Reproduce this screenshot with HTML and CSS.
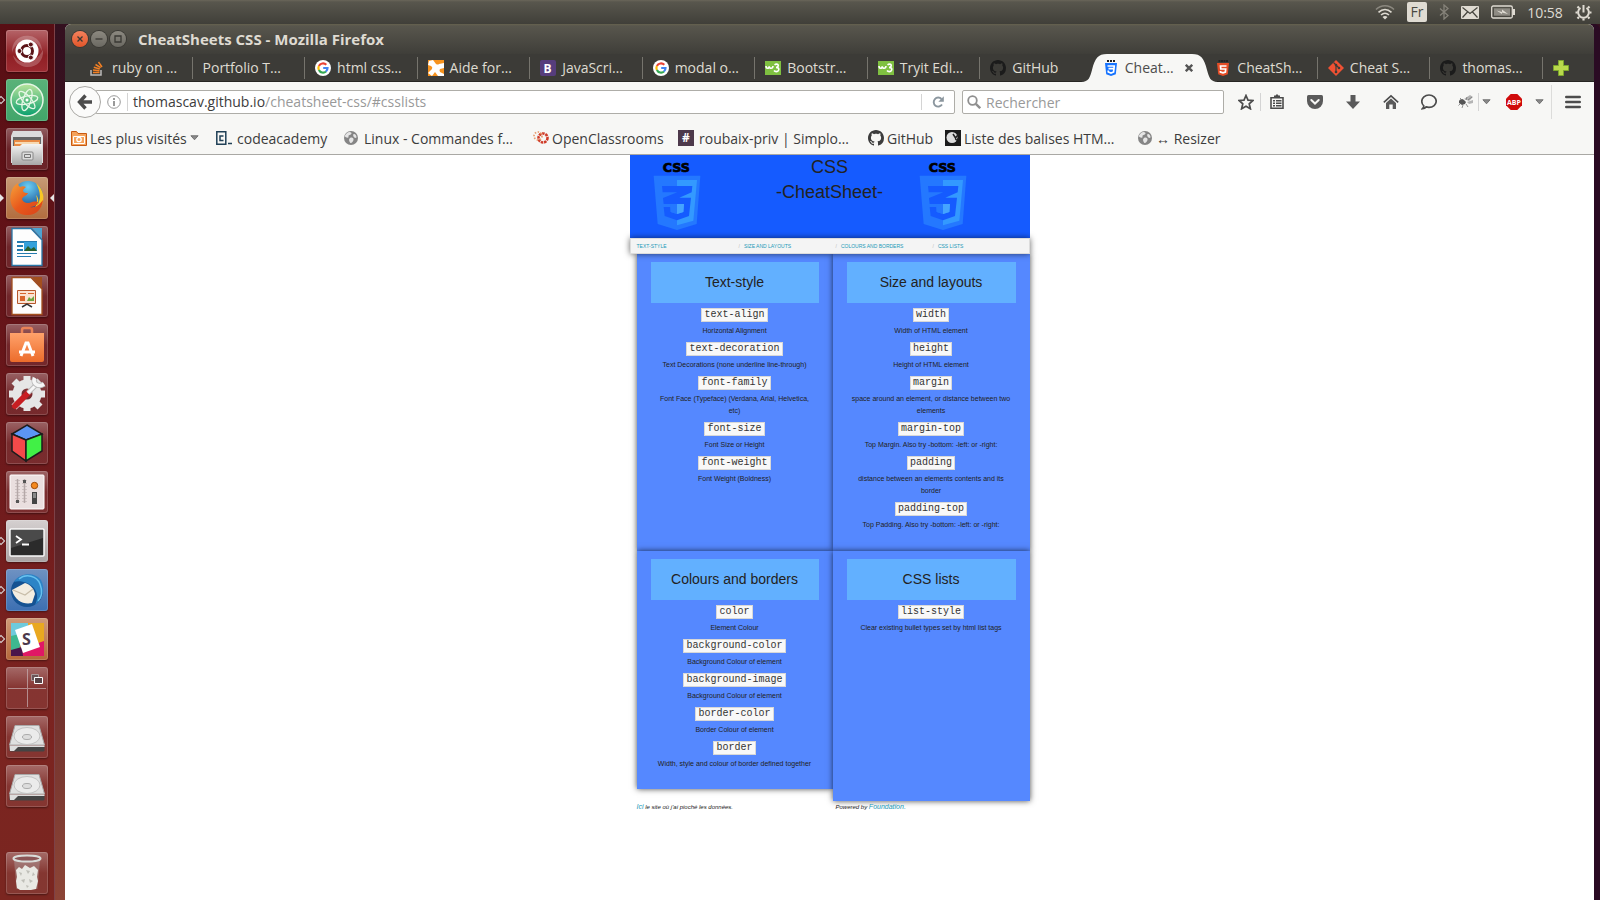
FILE: index.html
```html
<!DOCTYPE html>
<html lang="fr">
<head>
<meta charset="utf-8">
<title>CheatSheets CSS - Mozilla Firefox</title>
<link rel="stylesheet" href="styles.css">
</head>
<body>
<svg class="sprite" aria-hidden="true">
  <defs>
    <linearGradient id="metal" x1="0" y1="0" x2="0" y2="1"><stop offset="0" stop-color="#f4f4f4"/><stop offset="1" stop-color="#a8a8a8"/></linearGradient>
    <linearGradient id="bag" x1="0" y1="0" x2="0" y2="1"><stop offset="0" stop-color="#ffa26b"/><stop offset="1" stop-color="#ec6c2b"/></linearGradient>
    <linearGradient id="fox" x1="0" y1="0" x2="1" y2="1"><stop offset="0" stop-color="#f6a13a"/><stop offset=".5" stop-color="#e8591c"/><stop offset="1" stop-color="#d8421a"/></linearGradient>
    <radialGradient id="sea" cx=".5" cy=".2" r=".8"><stop offset="0" stop-color="#6cd0f5"/><stop offset="1" stop-color="#0d3f86"/></radialGradient>
    <linearGradient id="leaf" x1="0" y1="0" x2="0" y2="1"><stop offset="0" stop-color="#b8e39b"/><stop offset="1" stop-color="#0aa06e"/></linearGradient>
  </defs>
  <symbol id="github" viewBox="0 0 16 16"><path fill="currentColor" d="M8 0C3.58 0 0 3.58 0 8c0 3.54 2.29 6.53 5.47 7.59.4.07.55-.17.55-.38 0-.19-.01-.82-.01-1.49-2.01.37-2.53-.49-2.69-.94-.09-.23-.48-.94-.82-1.13-.28-.15-.68-.52-.01-.53.63-.01 1.08.58 1.23.82.72 1.21 1.87.87 2.33.66.07-.52.28-.87.51-1.07-1.78-.2-3.64-.89-3.64-3.95 0-.87.31-1.59.82-2.15-.08-.2-.36-1.02.08-2.12 0 0 .67-.21 2.2.82.64-.18 1.32-.27 2-.27s1.36.09 2 .27c1.53-1.04 2.2-.82 2.2-.82.44 1.1.16 1.92.08 2.12.51.56.82 1.27.82 2.15 0 3.07-1.87 3.75-3.65 3.95.29.25.54.73.54 1.48 0 1.07-.01 1.93-.01 2.2 0 .21.15.46.55.38A8.01 8.01 0 0 0 16 8c0-4.42-3.58-8-8-8z"/></symbol>
  <symbol id="google" viewBox="0 0 16 16"><circle cx="8" cy="8" r="8" fill="#fff"/><g fill="none" stroke-width="2.2"><path stroke="#ea4335" d="M3.9 6A4.6 4.6 0 0 1 11.3 4.8"/><path stroke="#fbbc05" d="M3.9 10.1A4.6 4.6 0 0 1 3.9 5.9"/><path stroke="#34a853" d="M11 11.5A4.6 4.6 0 0 1 3.9 10"/><path stroke="#4285f4" d="M8.2 8h4.3a4.6 4.6 0 0 1-1.6 3.5"/></g></symbol>
  <symbol id="w3" viewBox="0 0 16 16"><path fill="#7fc041" d="M0 1h16v14H0z"/><path fill="none" stroke="#fff" stroke-width="1.6" d="M1 6c0 3 3 3 3.2.2C4.400 9 7.800 9 8 6M9.500 4.800c2-1.500 4.500-.4 3.500 1.600-.5 1-1.500 1-2 1 2 0 3.500 1 2.500 3-.9 1.700-3.500 1.500-4.500.1"/></symbol>
  <symbol id="css-mini" viewBox="0 0 16 16"><path fill="#222" d="M4 0h2v2H4zM7 0h2v2H7zM10 0h2v2h-2z"/><path fill="#1673ff" d="M2 3h12l-1.200 11.300L8 16l-4.800-1.700z"/><path fill="none" stroke="#fff" stroke-width="1.700" d="M4.500 6h6.700l-.2 2.600H5.500M11 8l-.4 4L8 13l-2.700-1-.1-1.500"/></symbol>
  <symbol id="html-mini" viewBox="0 0 16 16"><path fill="#222" d="M3.500 0h2v2h-2zM6 0h2v2H6zM8.500 0h2v2h-2zM11 0h2v2h-2z"/><path fill="#e44d26" d="M2 3h12l-1.200 11.300L8 16l-4.800-1.700z"/><path fill="none" stroke="#fff" stroke-width="1.700" d="M11.500 6h-6l.3 3h4.900l-.3 3L8 12.800 5.500 12l-.1-1"/></symbol>
  <symbol id="globe" viewBox="0 0 16 16"><circle cx="8" cy="8" r="7" fill="#858585"/><path fill="#e5e5e5" d="M4 3c2-2 5-1 4.500.5S5 5 5.500 6.500 4 8 2.500 7 3 4 4 3zM7 8c2-1 4 0 3.500 2S8 14 7 12.500 5.500 9 7 8zM11 4c1.500 0 2.500 1.500 2.500 3S11 8 10.500 6.500 10 4 11 4z"/></symbol>
  <symbol id="down" viewBox="0 0 10 6"><path fill="#8a8a8a" stroke="#6b6b6b" d="M1 .5h8L5 5z"/></symbol>
  <symbol id="drive" viewBox="0 0 42 42"><path fill="#e0e0e0" stroke="#aaa" d="M9 9.500h24L38.500 29h-35z"/><path fill="#444" d="M3.500 30h35v4.500l-1 1h-33l-1-1z"/><path fill="#ddd" d="M3.500 29.500h35V31H12l-4 4H4z"/><ellipse cx="21" cy="20" rx="13" ry="8.500" fill="#ebebeb" stroke="#c2c2c2"/><ellipse cx="21" cy="21" rx="4.500" ry="2.500" fill="#ddd" stroke="#aaa"/></symbol>
  <symbol id="css-logo" viewBox="756 480 150 216">
    <text class="logo-word" x="788" y="516">CSS</text>
    <path fill="#2478ff" d="M761 527h140l-11 145-59 18-58-18z"/>
    <path fill="#3399ff" d="M831 540h60l-11 122-49 14z"/>
    <path fill="#155bff" d="M786 558h91l-2 19-37 16h35l-6 55-36 13-37-13-3-27h20l1 15 19 6 19-6 2-24h-61l-2-18 43-17h-44z"/>
    <path fill="#2478ff" d="M811 612h20v30l-19-6z"/>
    <path fill="#45a4ff" d="M831 612h21l-2 24-19 6z"/>
  </symbol>
</svg>

<header class="panel">
  <svg width="20" height="16" viewBox="0 0 20 16" fill="none" stroke="#dfdbd2" stroke-width="1.600"><path stroke="#8b887f" d="M1 5.500C6 .5 14 .5 19 5.500"/><path d="M3.500 8.300c4-3.700 9-3.700 13 0M6 11c2.500-2.200 5.500-2.200 8 0"/><path fill="#dfdbd2" stroke="none" d="M10 15.500 7.500 13c1.500-1.200 3.500-1.200 5 0z"/></svg>
  <span class="keyboard">Fr</span>
  <svg width="10" height="16" viewBox="0 0 10 16" fill="none" stroke="#86837a" stroke-width="1.300"><path d="m1 4.500 8 7L5 15V1l4 3.500-8 7"/></svg>
  <svg width="18" height="13" viewBox="0 0 18 13"><rect width="18" height="13" rx="1" fill="#dfdbd2"/><path fill="none" stroke="#45443d" stroke-width="1.200" d="m1.500 1.500 7.500 6 7.500-6M1.500 11.500 6.500 6M16.500 11.500l-5-5.500"/></svg>
  <svg width="24" height="14" viewBox="0 0 24 14"><rect x=".7" y="1" width="20.600" height="12" rx="1.500" fill="none" stroke="#dfdbd2" stroke-width="1.300"/><path fill="#8e8b83" d="M3 3.300h16v7.400H3z"/><path fill="#dfdbd2" d="M22 4h2v6h-2zM5.500 5.500 11 7V4.500l6 4.500-6-1.500V9z"/></svg>
  <time class="clock">10:58</time>
  <svg width="17" height="17" viewBox="0 0 17 17" fill="none" stroke="#dfdbd2"><path stroke-width="2" d="M5.500 3.800a5.400 5.400 0 1 0 6 0"/><path stroke-width="2" d="M8.500 1v7.500"/><path stroke-width="2.200" d="M.5 8.500h2M14.500 8.500h2M8.500 14.500v2M2.500 2.500 4 4M14.500 2.500 13 4M2.500 14.500 4 13M14.500 14.500 13 13"/></svg>
</header>

<div class="desktop">
  <nav class="launcher" aria-label="Lanceur">
    <button class="tile tile-dash" aria-label="Ubuntu"><svg viewBox="0 0 42 42"><path fill="#fff" opacity=".22" d="M6 23C5 11 14 4 24 6c7 1 12 7 12 15-4-10-14-14-22-9C9 15 7 19 6 23zM37 20c1 11-7 18-17 17C13 36 8 31 7 25c5 8 14 10 21 5 4-3 7-6 9-10z"/><circle cx="21" cy="21" r="11.500" fill="#fff"/><circle cx="21" cy="21" r="5.500" fill="none" stroke="#5b1418" stroke-width="3"/><g fill="#5b1418" stroke="#fff"><circle cx="13.500" cy="21" r="2.500"/><circle cx="24.800" cy="14.500" r="2.500"/><circle cx="24.800" cy="27.500" r="2.500"/></g></svg></button>
    <button class="tile tile-atom running" aria-label="Atom"><svg viewBox="0 0 42 42"><circle cx="21" cy="21" r="16" fill="url(#leaf)" stroke="#e6f7e6" stroke-width="1.500"/><g fill="none" stroke="#e6f7e6" stroke-width="1.300"><ellipse cx="21" cy="21" rx="11" ry="4" transform="rotate(-12 21 21)"/><ellipse cx="21" cy="21" rx="11" ry="4" transform="rotate(48 21 21)"/><ellipse cx="21" cy="21" rx="11" ry="4" transform="rotate(108 21 21)"/></g><circle cx="21" cy="21" r="1.500" fill="#fff"/></svg></button>
    <button class="tile" aria-label="Fichiers"><svg viewBox="0 0 42 42"><path fill="#dcdcdc" d="M7 3h28l2 5v27H5V8z"/><path fill="#666" d="M7 9h28v10H7z"/><path fill="#e88a45" d="M8 12h26v7H8z"/><path fill="#f7d9b2" d="M9 14h24v2H9z"/><path fill="url(#metal)" d="M6 18h8l2-2h20v21H6z"/><rect x="16" y="24" width="11" height="8" rx="1" fill="#ddd" stroke="#888"/><path fill="none" stroke="#777" d="M18.500 26.500h6v3h-6z"/></svg></button>
    <button class="tile tile-fox active" aria-label="Firefox"><svg viewBox="0 0 42 42"><circle cx="22" cy="19" r="15" fill="url(#sea)"/><path fill="#f9c624" d="M30 6c9 7 10 20 2 27-3 3-8 4-11 3 8-2 12-10 9-18 4 4 2 9 1 11 4-7 4-13-1-23z"/><path fill="url(#fox)" d="M6 13c1-3 3-5 6-7 0 2 1 3 2 4 2-1 4-1 6 0-1 1-3 2-3 4 1 2 3 2 5 2-1 3-5 3-6 6 1 4 6 5 10 3 4-1 7 0 6 1-2 3-5 4-8 4 6 1 9-2 13-7-1 10-8 16-17 15C8 37 1 26 6 13z"/></svg></button>
    <button class="tile" aria-label="Writer"><svg viewBox="0 0 42 42"><path fill="#fdfdfd" stroke="#2877a8" stroke-width="1.300" d="M6 2.500h19L36 14v25.500H6z"/><path fill="#4da3d1" d="M26 2h10v11z"/><path fill="#247bb0" d="M11 15h20v2H11zM11 19h6v2h-6zM11 23h6v2h-6zM11 27h20v1H11zM11 30h14v1H11z"/><path fill="#35a1db" d="M18 16h13v9H18z"/><path fill="#28612c" d="m18 25 4-5 3 3 3-2 3 4z"/></svg></button>
    <button class="tile" aria-label="Impress"><svg viewBox="0 0 42 42"><path fill="#fdfdfd" stroke="#a34f1e" stroke-width="1.300" d="M6 2.500h19L36 14v25.500H6z"/><path fill="#a34f1e" d="M26 2h10v11z"/><path fill="#fbe3d2" stroke="#b6572b" d="M11.500 15.500h18v13h-18z"/><path fill="#d8662d" d="M14 18h6v1h-6zM14 21h5v5h-5zM22 18h6v1h-6z"/><path fill="#6da43d" d="m21 26 2-4 2 2 3-3v5z"/><path fill="none" stroke="#333" stroke-width="1.500" d="m16 32 5-3 5 3"/></svg></button>
    <button class="tile" aria-label="Logithèque"><svg viewBox="0 0 42 42"><path fill="none" stroke="#e98257" stroke-width="2.500" d="M16 12V6q0-2 2-2h6q2 0 2 2v6"/><path fill="url(#bag)" d="M4 9h34v27q0 2-2 2H6q-2 0-2-2z"/><path fill="none" stroke="#fff" stroke-width="3" d="m15 32 5-13h2l5 13M13 28h16"/></svg></button>
    <button class="tile" aria-label="Paramètres"><svg viewBox="0 0 42 42"><circle cx="21" cy="21" r="10" fill="none" stroke="#e6e6e6" stroke-width="9"/><g stroke="#e6e6e6" stroke-width="7"><path d="M21 3v6M21 32v6M3 21h6M33 21h6M8 8l4 4M30 30l4 4M34 8l-4 4M8 34l4-4"/></g><path stroke="#c81e22" stroke-width="6" stroke-linecap="round" d="M9 33 22 20"/><path stroke="#bbb" stroke-width="5" d="m22 20 8-8"/><path stroke="#f6f6f6" stroke-width="3" d="m22 20 8-8"/><path fill="none" stroke="#bbb" stroke-width="5.500" d="M29 5c-3 5 3 10 9 6"/><path fill="none" stroke="#f6f6f6" stroke-width="3.500" d="M29 5c-3 5 3 10 9 6"/></svg></button>
    <button class="tile" aria-label="Unity Tweak"><svg viewBox="0 0 42 42" stroke="#1c1c1c" stroke-width="1.500"><path fill="#5c95f5" d="M21 3 36 12 20 18 6 12z"/><path fill="#f34a4a" d="M6 12 20 18v21L6 29z"/><path fill="#41f046" d="M20 18 36 12v17L20 39z"/></svg></button>
    <button class="tile" aria-label="Réglages"><svg viewBox="0 0 42 42"><rect x="4" y="4" width="34" height="34" rx="1" fill="#eadfdf" stroke="#fff"/><path stroke="#b5a8a8" stroke-width="1.500" d="M11.500 8v24M18.500 8v24"/><path stroke="#b5a8a8" stroke-dasharray="1 2" stroke-width="5" d="M11.500 9v22M18.500 9v22" opacity=".5"/><path fill="#555" d="M10 29h3v3h-3zM17 9h3v3h-3z"/><circle cx="28.500" cy="14.500" r="3.200" fill="#f58a1f" stroke="#9d4c0a"/><path fill="#444" d="M26 21h5v12h-5z"/><path fill="#888" d="M27 22h3v5h-3z"/></svg></button>
    <button class="tile tile-term running" aria-label="Terminal"><svg viewBox="0 0 42 42"><rect x="4" y="9" width="34" height="27" rx="1" fill="#2b2b2b" stroke="#fafafa" stroke-width="1.500"/><path fill="#4a4a4a" d="M5 10h32v8L5 28z"/><path fill="none" stroke="#fff" stroke-width="1.800" d="m10 16 5 3.500-5 3.500M16 24.500h7"/></svg></button>
    <button class="tile tile-bird running" aria-label="Thunderbird"><svg viewBox="0 0 42 42"><circle cx="21" cy="22" r="16" fill="#155292"/><path fill="#2d84c6" d="M8 13C14 3 29 3 35 11c5 9 1 20-6 25 3-6 3-12-1-17-4-5-14-8-20-6z"/><path fill="#f3ede1" d="m6 21 13-7c6 2 9 6 10 11l-3 9c-8 2-17-2-20-13z"/><path fill="none" stroke="#c8bda9" stroke-width="1.200" d="m7 21 12 5 8-6"/><path fill="none" stroke="#68c1ef" stroke-width="1.500" d="M13 10c7-6 18-3 21 5s1 14-2 17"/></svg></button>
    <button class="tile tile-slack running" aria-label="Slack"><svg viewBox="0 0 42 42"><path fill="#3eb890" d="M5 5h13L12 38H5z"/><path fill="#6ecadc" d="M5 5h17v9L5 18z"/><path fill="#e9a820" d="M22 5h16v20H27z"/><path fill="#e01765" d="m15 31 23-8v15H15z"/><path fill="#4a154b" d="m5 32 11-3 1 9H5z"/><path fill="#fff" d="m9 12 17-6 8 23-17 6z"/><text class="mark" x="16" y="27" font-size="16" fill="#4d394b">S</text></svg></button>
    <button class="tile" aria-label="Espaces de travail"><svg viewBox="0 0 42 42"><path stroke="#c9b2b4" d="M21.500 2v38M2 21.500h38" opacity=".7"/><path fill="#6b5457" stroke="#a99" d="M25.500 7.500h7v6h-7z"/><path fill="#574347" stroke="#fff" d="M28.500 10.500h8v6h-8z"/></svg></button>
    <button class="tile" aria-label="Disque 1"><svg><use href="#drive"/></svg></button>
    <button class="tile" aria-label="Disque 2"><svg><use href="#drive"/></svg></button>
    <button class="tile tile-trash" aria-label="Corbeille"><svg viewBox="0 0 42 42"><path fill="#bbb" opacity=".35" d="M8 8h26l-2.500 29h-21z"/><path fill="#e9e9e4" d="m10 18 3-3 3 2 3-4 5 3 4-2 4 4-1 7 1 4-2 8-5 1H14l-3-2-1-7 1-4z"/><path fill="#bfbfb8" d="m13 20 3 1-1 3zM20 18l4 1-2 3zM27 20l2 3-3 1zM15 28l4-1-1 4zM23 27l4 2-3 2zM20 33l3 1-2 2z"/><ellipse cx="21" cy="6.500" rx="13.500" ry="3" fill="#8b5556" stroke="#d9dcd9" stroke-width="2"/></svg></button>
  </nav>

  <main class="window">
    <div class="titlebar">
      <button class="ctl ctl-close" aria-label="Fermer"><svg viewBox="0 0 16 16"><path d="m5.500 5.500 5 5m0-5-5 5"/></svg></button>
      <button class="ctl" aria-label="Réduire"><svg viewBox="0 0 16 16"><path d="M4.500 8h7"/></svg></button>
      <button class="ctl" aria-label="Agrandir"><svg viewBox="0 0 16 16"><path d="M5 5h6v6H5z"/></svg></button>
      <h1 class="window-title">CheatSheets CSS - Mozilla Firefox</h1>
    </div>

    <div class="tabs" role="tablist">
      <button class="tab" role="tab"><svg class="fav" viewBox="0 0 16 16" fill="none"><path stroke="#bcbbbb" stroke-width="1.500" d="M1 10v5h10v-5"/><path stroke="#f48024" stroke-width="1.500" d="M3 12.500h6.500M3 10l6.500.8M3.800 7.300l6 1.700M5.500 4.500l5.200 3.200M8.500 2l3.500 5"/></svg>ruby on …</button>
      <button class="tab" role="tab">Portfolio T…</button>
      <button class="tab" role="tab"><svg class="fav"><use href="#google"/></svg>html css…</button>
      <button class="tab" role="tab"><svg class="fav" viewBox="0 0 16 16"><path fill="#f7931e" d="M0 0h16v16H0z"/><path fill="#fff" d="M0 5 1 1l4-1 3 4q2 1 3 0l5-1v5l-4 1q-1 1 0 3l4 2v2h-6l-3-4-3 4-4-3 4-4q1-2-1-3z"/></svg>Aide for…</button>
      <button class="tab" role="tab"><svg class="fav" viewBox="0 0 16 16"><rect width="16" height="16" rx="2" fill="#563d7c"/><text class="mark" x="3.500" y="12.500" font-size="12" fill="#fff">B</text></svg>JavaScri…</button>
      <button class="tab" role="tab"><svg class="fav"><use href="#google"/></svg>modal o…</button>
      <button class="tab" role="tab"><svg class="fav"><use href="#w3"/></svg>Bootstr…</button>
      <button class="tab" role="tab"><svg class="fav"><use href="#w3"/></svg>Tryit Edi…</button>
      <button class="tab tab-before" role="tab"><svg class="fav fav-dark"><use href="#github"/></svg>GitHub</button>
      <button class="tab tab-current" role="tab" aria-selected="true"><svg class="tab-shape" viewBox="0 0 137 28" preserveAspectRatio="none"><path fill="#f7f7f5" d="M0 28c8 0 9-5 11-12C14 4 17 0 26 0h85c9 0 12 4 15 16 2 7 3 12 11 12z"/></svg><svg class="fav"><use href="#css-mini"/></svg><span>Cheat…</span><svg class="tab-close" viewBox="0 0 8 8"><path stroke="#555" stroke-width="2.400" d="m.8.800 6.400 6.400m0-6.400L.8 7.200"/></svg></button>
      <button class="tab" role="tab"><svg class="fav"><use href="#html-mini"/></svg>CheatSh…</button>
      <button class="tab" role="tab"><svg class="fav" viewBox="0 0 16 16"><path fill="#f05133" d="m8 0 8 8-8 8-8-8z"/><path fill="none" stroke="#3c3b37" stroke-width="1.200" d="m5.500 2.500 5.500 5.500M8 5v7"/><g fill="#3c3b37"><circle cx="8" cy="5" r="1.300"/><circle cx="11" cy="8" r="1.300"/><circle cx="8" cy="12" r="1.300"/></g></svg>Cheat S…</button>
      <button class="tab" role="tab"><svg class="fav fav-dark"><use href="#github"/></svg>thomas…</button>
      <button class="tab-new" aria-label="Nouvel onglet"><svg viewBox="0 0 16 16"><path fill="#b9d94c" stroke="#7ca52d" d="M5.500.5h5v5h5v5h-5v5h-5v-5h-5v-5h5z"/></svg></button>
    </div>

    <div class="toolbar">
      <button class="back" aria-label="Retour"><svg viewBox="0 0 16 16" fill="none" stroke="#4c4c4c" stroke-width="3.400"><path d="M8.500 1.500 2.500 8l6 6.500M3 8h12"/></svg></button>
      <div class="address">
        <svg class="info" viewBox="0 0 14 14"><circle cx="7" cy="7" r="6.300" fill="none" stroke="#999"/><path fill="#999" d="M6 3h2v2H6zM6 6h2v5H6z"/></svg>
        <span class="address-text" role="textbox" aria-label="Adresse">thomascav.github.io<span class="dim">/cheatsheet-css/#csslists</span></span>
        <button class="reload" aria-label="Actualiser"><svg viewBox="0 0 12 12"><path fill="none" stroke="#8b969e" stroke-width="1.900" d="M10 8.500A4.500 4.500 0 1 1 9.500 3"/><path fill="#8b969e" d="M11.800.3v5.500H6.300z"/></svg></button>
      </div>
      <label class="search">
        <svg viewBox="0 0 14 14" fill="none" stroke="#8f8f8f"><circle cx="5.500" cy="5.500" r="4.300" stroke-width="1.800"/><path stroke-width="2.400" d="m8.800 8.800 4.400 4.400"/></svg>
        <input type="text" placeholder="Rechercher" aria-label="Rechercher">
      </label>
      <button class="tool tool-star" aria-label="Marquer"><svg viewBox="0 0 16 16"><path fill="none" stroke="#4c4c4c" stroke-width="1.700" d="m8 1.500 2 4.600 4.900.4-3.700 3.300 1.200 5L8 12.200l-4.400 2.600 1.200-5L1.100 6.500 6 6.100z"/></svg></button>
      <button class="tool tool-lined" aria-label="Marque-pages"><svg viewBox="0 0 16 16"><path fill="none" stroke="#4c4c4c" stroke-width="1.600" d="M2 3.800h12v10.400H2z"/><path fill="#4c4c4c" d="M5 1.500h1.500L8 0l1.500 1.500H11V4H5zM4 6h2v1.500H4zM7 6h5.500v1.500H7zM4 8.500h2V10H4zM7 8.500h5.500V10H7zM4 11h2v1.500H4zM7 11h5.500v1.500H7z"/></svg></button>
      <button class="tool" aria-label="Pocket"><svg viewBox="0 0 16 16"><path fill="#5a5a5a" d="M1.500 1h13Q16 1 16 2.500V7a8 8 0 0 1-16 0V2.500Q0 1 1.500 1z"/><path fill="none" stroke="#f7f7f5" stroke-width="2" stroke-linecap="round" d="m4.300 6 3.700 3.500L11.700 6"/></svg></button>
      <button class="tool" aria-label="Téléchargements"><svg viewBox="0 0 16 16"><path fill="#5a5a5a" d="M5.500 1h5v6.500H15L8 15 1 7.500h4.500z"/></svg></button>
      <button class="tool" aria-label="Accueil"><svg viewBox="0 0 16 16"><path fill="none" stroke="#4c4c4c" stroke-width="1.600" d="M.8 8.300 8 1.800l7.200 6.500"/><path fill="#5a5a5a" d="m3 9 5-4.500L13 9v6H9.700v-4.500H6.300V15H3z"/></svg></button>
      <button class="tool" aria-label="Hello"><svg viewBox="0 0 16 16"><path fill="none" stroke="#4c4c4c" stroke-width="1.700" d="M8 1c4 0 7.200 2.700 7.200 6.200S12 13.300 8 13.300c-1 0-2-.1-2.800-.4C4.300 14 3 14.600 1.500 14.700c.8-.8 1.300-1.700 1.300-2.900A5.800 5.800 0 0 1 .8 7.200C.8 3.700 4 1 8 1z"/></svg></button>
      <button class="tool tool-bug" aria-label="Firebug"><svg viewBox="0 0 16 16"><path fill="#b4b4b4" d="M6 5 12 1l3 2-4 4zM9 8l6-2v3l-4 1z"/><path fill="#555" d="M1 7c1-2 3-3 5-1l2 2-1 2-3 1-3-2z"/><path stroke="#777" stroke-width=".8" d="M2 10 .5 11.500M5 11l-1 3M8 10l2 3M4 6 2 4M8 6l1-3M10 6l4-3"/></svg></button>
      <button class="more more-lined" aria-label="Options Firebug"><svg><use href="#down"/></svg></button>
      <button class="tool tool-abp" aria-label="Adblock Plus"><svg viewBox="0 0 16 16"><path fill="#d00b0b" d="M4.700 0h6.600L16 4.700v6.600L11.300 16H4.700L0 11.300V4.700z"/><text class="mark" x="1" y="10.800" font-size="7" fill="#fff">ABP</text></svg></button>
      <button class="more more-plain" aria-label="Options Adblock"><svg><use href="#down"/></svg></button>
      <button class="menu" aria-label="Menu"><svg viewBox="0 0 16 14"><path stroke="#4c4c4c" stroke-width="2.600" stroke-linecap="round" d="M1.300 2h13.400M1.300 7h13.400M1.300 12h13.400"/></svg></button>
    </div>

    <nav class="bookmarks" aria-label="Marque-pages">
      <a href="#"><svg class="fav" viewBox="0 0 16 16"><path fill="#f5a35c" stroke="#c85a12" d="M.5 15.500V1.500h5l1.500 2h8.500v12z"/><path fill="none" stroke="#fff" d="M2.500 13.500v-7h11v7z"/><circle cx="8" cy="9.500" r="2.200" fill="none" stroke="#fff" stroke-width="1.300"/></svg><span>Les plus visités</span><svg class="caret"><use href="#down"/></svg></a>
      <a href="#"><svg class="fav" viewBox="0 0 16 16"><path fill="none" stroke="#204056" stroke-width="1.500" d="M.8 1.800h9v12.400h-9zM12 13.500h4M7.500 6H4v4.500h3.500"/></svg><span class="wide">codeacademy</span></a>
      <a href="#"><svg class="fav"><use href="#globe"/></svg><span class="wide">Linux - Commandes f…</span></a>
      <a href="#"><svg class="fav" viewBox="0 0 16 16"><circle cx="10" cy="8" r="4.500" fill="none" stroke="#cf3b28" stroke-width="2.600" stroke-dasharray="2.500 .8"/><circle cx="5" cy="6" r="4" fill="none" stroke="#e79b6c" stroke-width="1.700" stroke-dasharray="1.500 1.500"/></svg><span>OpenClassrooms</span></a>
      <a href="#"><svg class="fav" viewBox="0 0 16 16"><path fill="#4d394b" d="M0 0h16v16H0z"/><text class="mark" x="4" y="12" font-size="12" fill="#fff">#</text></svg><span class="wide">roubaix-priv | Simplo…</span></a>
      <a href="#"><svg class="fav"><use href="#github"/></svg><span>GitHub</span></a>
      <a href="#"><svg class="fav" viewBox="0 0 16 16"><path fill="#1b1b1b" d="M0 0h16v16H0z"/><circle cx="7" cy="7.500" r="5.500" fill="#ddd"/><path fill="none" stroke="#222" stroke-width="1.500" d="m8 4 2.500 4L14 3.500M10.500 8c0 3 3 2 3 0"/></svg><span>Liste des balises HTM…</span></a>
      <a href="#"><svg class="fav"><use href="#globe"/></svg><span>↔ Resizer</span></a>
    </nav>

    <div class="viewport">
      <article class="sheet">
        <header class="hero">
          <svg class="logo"><use href="#css-logo"/></svg>
          <h2>CSS<br>-CheatSheet-</h2>
          <svg class="logo"><use href="#css-logo"/></svg>
        </header>
        <ul class="crumbs">
          <li><a href="#textstyle">TEXT-STYLE</a></li>
          <li><a href="#layouts">SIZE AND LAYOUTS</a></li>
          <li><a href="#colours">COLOURS AND BORDERS</a></li>
          <li><a href="#csslists">CSS LISTS</a></li>
        </ul>
        <div class="cards">
          <section class="card" id="textstyle">
            <h3>Text-style</h3>
            <dl>
              <dt><code>text-align</code></dt><dd>Horizontal Alignment</dd>
              <dt><code>text-decoration</code></dt><dd>Text Decorations (none underline line-through)</dd>
              <dt><code>font-family</code></dt><dd>Font Face (Typeface) (Verdana, Arial, Helvetica,<br>etc)</dd>
              <dt><code>font-size</code></dt><dd>Font Size or Height</dd>
              <dt><code>font-weight</code></dt><dd>Font Weight (Boldness)</dd>
            </dl>
          </section>
          <section class="card" id="layouts">
            <h3>Size and layouts</h3>
            <dl>
              <dt><code>width</code></dt><dd>Width of HTML element</dd>
              <dt><code>height</code></dt><dd>Height of HTML element</dd>
              <dt><code>margin</code></dt><dd>space around an element, or distance between two<br>elements</dd>
              <dt><code>margin-top</code></dt><dd>Top Margin. Also try -bottom: -left: or -right:</dd>
              <dt><code>padding</code></dt><dd>distance between an elements contents and its<br>border</dd>
              <dt><code>padding-top</code></dt><dd>Top Padding. Also try -bottom: -left: or -right:</dd>
            </dl>
          </section>
          <section class="card card-short" id="colours">
            <h3>Colours and borders</h3>
            <dl>
              <dt><code>color</code></dt><dd>Element Colour</dd>
              <dt><code>background-color</code></dt><dd>Background Colour of element</dd>
              <dt><code>background-image</code></dt><dd>Background Colour of element</dd>
              <dt><code>border-color</code></dt><dd>Border Colour of element</dd>
              <dt><code>border</code></dt><dd>Width, style and colour of border defined together</dd>
            </dl>
          </section>
          <section class="card card-tall" id="csslists">
            <h3>CSS lists</h3>
            <dl>
              <dt><code>list-style</code></dt><dd>Clear existing bullet types set by html list tags</dd>
            </dl>
          </section>
        </div>
        <footer class="credits">
          <p><a href="#">Ici</a> le site où j'ai pioché les données.</p>
          <p>Powered by <a href="#">Foundation.</a></p>
        </footer>
      </article>
    </div>
  </main>
</div>
</body>
</html>
```

FILE: styles.css
```css
* { box-sizing: border-box; }
html, body { height: 100%; }
body {
  margin: 0;
  display: flex;
  flex-direction: column;
  font-family: "Open Sans", "Noto Sans", sans-serif;
  font-size: 14px;
  color: #3c3c3c;
  background: linear-gradient(#32101f, #471320 40%, #8c4436);
}
button {
  margin: 0;
  padding: 0;
  border: 0;
  background: none;
  color: inherit;
  font: inherit;
}
a { color: inherit; text-decoration: none; }
svg { display: block; flex: none; }
.sprite { position: absolute; width: 0; height: 0; }
.mark { font-family: "Open Sans", sans-serif; font-weight: 700; }

/* Top panel */
.panel {
  display: flex;
  align-items: center;
  justify-content: flex-end;
  gap: 12px;
  flex: none;
  height: 24px;
  padding-right: 8px;
  background: linear-gradient(#6a665a, #58564d 2px, #403f39);
  color: #dfdbd2;
}
.keyboard {
  width: 20px;
  height: 20px;
  border-radius: 2px;
  background: #dfdbd2;
  color: #4a4942;
  line-height: 20px;
  text-align: center;
}
.clock { width: 36px; white-space: nowrap; display: flex; justify-content: center; }

.desktop { display: flex; flex: 1; min-height: 0; }

/* Launcher */
.launcher {
  display: flex;
  flex-direction: column;
  gap: 7px;
  width: 55px;
  flex: none;
  padding: 6px 0 6px 6px;
  border-right: 1px solid #7d4147;
  background: linear-gradient(#580e14, #68161a 40%, #7b2320 75%, #7a2620);
}
.tile {
  position: relative;
  width: 42px;
  height: 42px;
  border-radius: 3px;
  background: linear-gradient(rgba(255, 255, 255, .32), rgba(255, 255, 255, .08) 50%, rgba(255, 255, 255, .08));
  box-shadow: inset 0 0 0 1px rgba(255, 255, 255, .16), 0 1px 2px rgba(0, 0, 0, .4);
}
.tile svg { width: 42px; height: 42px; }
.tile-dash { background: linear-gradient(#b56468, #8f1f24 60%, #9c2a30); }
.tile-atom { background: linear-gradient(#5ab279, #41a56a); }
.tile-fox { background: linear-gradient(#c69a76, #b26d3e); }
.tile-term { background: linear-gradient(#d5d0d0, #aaa4a4); }
.tile-bird { background: linear-gradient(#6f92c2, #3c6fb2); }
.tile-slack { background: linear-gradient(#cf9a78, #b5673a); }
.tile-trash { margin-top: auto; }
.running::before {
  content: "";
  position: absolute;
  left: -8px;
  top: 18px;
  width: 4px;
  height: 4px;
  border: 1px solid #ddd;
  transform: rotate(45deg);
}
.active::before, .active::after {
  content: "";
  position: absolute;
  top: 17px;
  border: 4px solid transparent;
}
.active::before { left: -6px; border-left-color: #e6e6e6; border-right-width: 0; }
.active::after { right: -6px; border-right-color: #e6e6e6; border-left-width: 0; }

/* Browser window */
.window {
  display: flex;
  flex-direction: column;
  flex: 1;
  min-width: 0;
  margin: 0 6px 0 10px;
  border-radius: 6px 6px 0 0;
  background: #fff;
  box-shadow: 6px 0 0 #2a0b23;
}
.titlebar {
  display: flex;
  align-items: center;
  gap: 3px;
  height: 30px;
  padding-left: 7px;
  border-radius: 6px 6px 0 0;
  background: linear-gradient(#66624f, #58564d 2px, #3f3e39);
}
.ctl {
  width: 16px;
  height: 16px;
  border-radius: 50%;
  background: linear-gradient(#8c8980, #6b6962);
  box-shadow: 0 0 0 1px #3a3934;
}
.ctl svg { width: 16px; height: 16px; fill: none; stroke: #3a3934; stroke-width: 1.3; }
.ctl-close { background: linear-gradient(#f4815c, #e2562a); }
.window-title {
  margin: 0 0 0 9px;
  color: #dfdbd2;
  font-size: 15px;
  line-height: 20px;
  font-weight: 700;
}

.tabs {
  display: flex;
  align-items: stretch;
  height: 28px;
  padding: 0 0 0 15px;
  border-bottom: 1px solid #262522;
  background: #3c3b37;
  color: #dfdbd2;
}
.tab {
  position: relative;
  display: flex;
  align-items: center;
  gap: 6px;
  flex: 1 1 80px;
  min-width: 0;
  padding: 0 0 0 10px;
  white-space: nowrap;
}
.tab::after {
  content: "";
  position: absolute;
  right: 0;
  top: 3px;
  width: 1px;
  height: 22px;
  background: #76746d;
}
.tab-before::after, .tab-current::after { display: none; }
.tab-current { color: #4c4c4c; padding-right: 12px; z-index: 1; }
.tab-current > * { position: relative; }
.tab-current .tab-shape { position: absolute; left: -12px; top: 0; width: 137px; height: 28px; }
.tab-close { width: 8px; height: 8px; margin-left: auto; }
.tab-new { width: 51px; padding: 0 0 0 10px; }
.tab-new svg { width: 16px; height: 16px; }
.fav { width: 16px; height: 16px; }
.fav-dark { color: #1b1b1b; }

.toolbar {
  display: flex;
  align-items: center;
  height: 40px;
  padding-left: 4px;
  background: #f7f7f5;
}
.back {
  position: relative;
  z-index: 1;
  display: grid;
  place-items: center;
  flex: none;
  width: 32px;
  height: 32px;
  border: 1px solid #aaa9a5;
  border-radius: 50%;
  background: #fbfbfa;
}
.back svg { width: 16px; height: 16px; }
.address, .search {
  display: flex;
  align-items: center;
  height: 24px;
  border: 1px solid #aeada8;
  border-radius: 2px;
  background: #fff;
}
.address { flex: 1; min-width: 0; margin-left: -6px; padding-left: 11px; }
.info { width: 14px; height: 14px; }
.address-text {
  flex: 1;
  margin-left: 6px;
  padding-left: 5px;
  border-left: 1px solid #d4d4d4;
  line-height: 18px;
  white-space: nowrap;
}
.dim { color: #999; }
.reload {
  display: grid;
  place-items: center;
  width: 33px;
  height: 16px;
  border-left: 1px solid #d4d4d4;
}
.reload svg { width: 12px; height: 12px; }
.search { width: 262px; margin: 0 8px 0 7px; padding-left: 4px; gap: 5px; }
.search svg { width: 14px; height: 14px; }
.search input {
  flex: 1;
  min-width: 0;
  padding: 0;
  border: 0;
  outline: 0;
  background: none;
  font: inherit;
}
.search input::placeholder { color: #999; opacity: 1; }
.tool {
  display: grid;
  place-items: center;
  flex: none;
  width: 38px;
  height: 18px;
}
.tool svg { width: 16px; height: 16px; }
.tool-star { width: 28px; }
.tool-lined { width: 36px; padding-right: 3px; border-left: 1px solid #d4d4d4; }
.tool-bug { width: 30px; padding-left: 6px; }
.tool-abp { width: 40px; }
.more { width: 16px; height: 18px; }
.more svg { width: 9px; height: 6px; margin: auto; }
.more-lined { border-left: 1px solid #d4d4d4; }
.more-plain { width: 10px; }
.menu {
  display: grid;
  place-items: center;
  width: 42px;
  height: 34px;
  margin: 0 1px 0 7px;
  border-left: 1px solid #dcdcda;
}
.menu svg { width: 16px; height: 14px; }

.bookmarks {
  display: grid;
  grid-template-columns: 145px 127px 190px 145px 190px 77px 192px auto;
  justify-content: start;
  align-items: center;
  height: 33px;
  padding-left: 6px;
  border-bottom: 1px solid #a9a8a4;
  background: #f7f7f5;
}
.bookmarks a { display: flex; align-items: center; gap: 3px; white-space: nowrap; }
.wide { margin-left: 2px; }
.caret { width: 9px; height: 6px; }

/* Page */
.viewport { flex: 1; background: #fff; }
.sheet {
  max-width: 400px;
  margin: 0 auto;
  font-family: "Liberation Sans", Arial, sans-serif;
  color: #222;
}
.hero {
  display: grid;
  grid-template-columns: repeat(3, 1fr);
  height: 83px;
  background: #155bff;
}
.logo { width: 50px; height: 72px; margin: 5px 0 0 22px; }
.logo-word {
  font-family: "DejaVu Sans", sans-serif;
  font-size: 38px;
  font-weight: 700;
  stroke: #000;
  stroke-width: 2px;
}
.hero h2 {
  margin: 0;
  font-size: 18px;
  line-height: 25px;
  font-weight: 400;
  text-align: center;
}
.crumbs {
  position: relative;
  display: grid;
  grid-template-columns: 102px 97px 97px auto;
  align-items: center;
  height: 16px;
  margin: 0;
  padding: 0 0 0 6px;
  border: 1px solid #dcdcdc;
  list-style: none;
  background: #f4f4f4;
  box-shadow: 0 0 6px rgba(0, 0, 0, .6);
  color: #2199b8;
  font-size: 5px;
  line-height: 12px;
}
.crumbs li + li::before { content: "/"; margin-right: 4px; color: #bbb; }
.cards {
  display: grid;
  grid-template-columns: 196px 197px;
  align-items: start;
  margin-left: 7px;
}
.card {
  height: 100%;
  padding: 8px 14px 15px;
  background: #5588ff;
  box-shadow: 0 0 6px rgba(0, 0, 0, .7);
  text-align: center;
}
.card-short { height: 238px; }
.card-tall { height: 250px; }
.card h3 {
  margin: 0 0 4px;
  background: #62b0ff;
  font-size: 14px;
  line-height: 41px;
  font-weight: 400;
}
.card dl { margin: 0; }
.card dt { display: flex; justify-content: center; padding: 0 0 3px; }
.card code {
  display: block;
  height: 14px;
  padding: 0 2px;
  border: 1px solid #d8d8d8;
  background: #f8f8f8;
  color: #333;
  font-family: "Liberation Mono", monospace;
  font-size: 10px;
  line-height: 12px;
}
.card dd {
  margin: 0 0 5px;
  font-size: 7px;
  line-height: 12px;
}
.card dt:first-child { padding-top: 1px; }
.card dd + dt { padding-top: 1px; padding-bottom: 2px; margin-top: -1px; margin-bottom: 1px; }
.credits {
  display: grid;
  grid-template-columns: 199px auto;
  margin-left: 7px;
  font-size: 6px;
  font-style: italic;
}
.credits p { margin: 0; line-height: 12px; }
.credits a { color: #2199b8; font-size: 7px; }
```
